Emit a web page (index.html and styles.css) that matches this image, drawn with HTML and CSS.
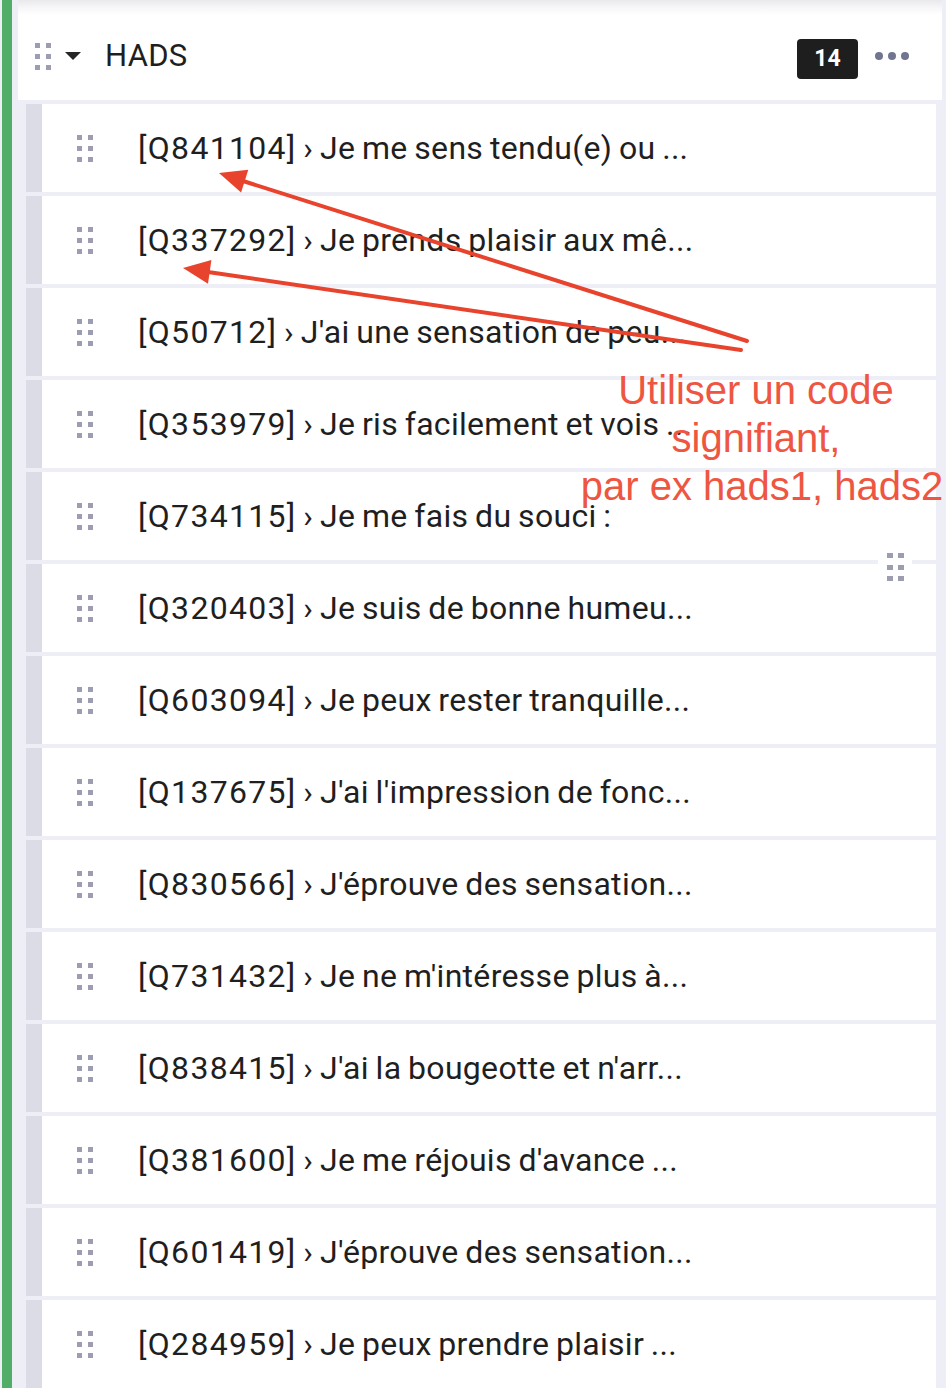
FILE: index.html
```html
<!DOCTYPE html>
<html lang="fr">
<head>
<meta charset="utf-8">
<title>HADS</title>
<link rel="stylesheet" href="styles.css">
</head>
<body>
<div class="board">
  <section class="group">
    <header class="group-head">
      <svg class="grip" width="17" height="27" viewBox="0 0 17 27"><rect x="0" y="0" width="5" height="5"/><rect x="11" y="0" width="5" height="5"/><rect x="0" y="11" width="5" height="5"/><rect x="11" y="11" width="5" height="5"/><rect x="0" y="22" width="5" height="5"/><rect x="11" y="22" width="5" height="5"/></svg>
      <svg class="caret" width="16" height="8" viewBox="0 0 16 8"><polygon points="0,0 16,0 8,8"/></svg>
      <h2 class="title">HADS</h2>
      <span class="count">14</span>
      <span class="more"><i></i><i></i><i></i></span>
    </header>
    <ul class="items">
      <li class="item"><span class="bar"></span><svg class="grip" width="17" height="27" viewBox="0 0 17 27"><rect x="0" y="0" width="5" height="5"/><rect x="11" y="0" width="5" height="5"/><rect x="0" y="11" width="5" height="5"/><rect x="11" y="11" width="5" height="5"/><rect x="0" y="22" width="5" height="5"/><rect x="11" y="22" width="5" height="5"/></svg><span class="label"><span class="code">[Q841104]</span> › Je me sens tendu(e) ou ...</span></li>
      <li class="item"><span class="bar"></span><svg class="grip" width="17" height="27" viewBox="0 0 17 27"><rect x="0" y="0" width="5" height="5"/><rect x="11" y="0" width="5" height="5"/><rect x="0" y="11" width="5" height="5"/><rect x="11" y="11" width="5" height="5"/><rect x="0" y="22" width="5" height="5"/><rect x="11" y="22" width="5" height="5"/></svg><span class="label"><span class="code">[Q337292]</span> › Je prends plaisir aux mê...</span></li>
      <li class="item"><span class="bar"></span><svg class="grip" width="17" height="27" viewBox="0 0 17 27"><rect x="0" y="0" width="5" height="5"/><rect x="11" y="0" width="5" height="5"/><rect x="0" y="11" width="5" height="5"/><rect x="11" y="11" width="5" height="5"/><rect x="0" y="22" width="5" height="5"/><rect x="11" y="22" width="5" height="5"/></svg><span class="label"><span class="code">[Q50712]</span> › J'ai une sensation de peu...</span></li>
      <li class="item"><span class="bar"></span><svg class="grip" width="17" height="27" viewBox="0 0 17 27"><rect x="0" y="0" width="5" height="5"/><rect x="11" y="0" width="5" height="5"/><rect x="0" y="11" width="5" height="5"/><rect x="11" y="11" width="5" height="5"/><rect x="0" y="22" width="5" height="5"/><rect x="11" y="22" width="5" height="5"/></svg><span class="label"><span class="code">[Q353979]</span> › Je ris facilement et vois ...</span></li>
      <li class="item"><span class="bar"></span><svg class="grip" width="17" height="27" viewBox="0 0 17 27"><rect x="0" y="0" width="5" height="5"/><rect x="11" y="0" width="5" height="5"/><rect x="0" y="11" width="5" height="5"/><rect x="11" y="11" width="5" height="5"/><rect x="0" y="22" width="5" height="5"/><rect x="11" y="22" width="5" height="5"/></svg><span class="label"><span class="code">[Q734115]</span> › Je me fais du souci :</span></li>
      <li class="item"><span class="bar"></span><svg class="grip" width="17" height="27" viewBox="0 0 17 27"><rect x="0" y="0" width="5" height="5"/><rect x="11" y="0" width="5" height="5"/><rect x="0" y="11" width="5" height="5"/><rect x="11" y="11" width="5" height="5"/><rect x="0" y="22" width="5" height="5"/><rect x="11" y="22" width="5" height="5"/></svg><span class="label"><span class="code">[Q320403]</span> › Je suis de bonne humeu...</span></li>
      <li class="item"><span class="bar"></span><svg class="grip" width="17" height="27" viewBox="0 0 17 27"><rect x="0" y="0" width="5" height="5"/><rect x="11" y="0" width="5" height="5"/><rect x="0" y="11" width="5" height="5"/><rect x="11" y="11" width="5" height="5"/><rect x="0" y="22" width="5" height="5"/><rect x="11" y="22" width="5" height="5"/></svg><span class="label"><span class="code">[Q603094]</span> › Je peux rester tranquille...</span></li>
      <li class="item"><span class="bar"></span><svg class="grip" width="17" height="27" viewBox="0 0 17 27"><rect x="0" y="0" width="5" height="5"/><rect x="11" y="0" width="5" height="5"/><rect x="0" y="11" width="5" height="5"/><rect x="11" y="11" width="5" height="5"/><rect x="0" y="22" width="5" height="5"/><rect x="11" y="22" width="5" height="5"/></svg><span class="label"><span class="code">[Q137675]</span> › J'ai l'impression de fonc...</span></li>
      <li class="item"><span class="bar"></span><svg class="grip" width="17" height="27" viewBox="0 0 17 27"><rect x="0" y="0" width="5" height="5"/><rect x="11" y="0" width="5" height="5"/><rect x="0" y="11" width="5" height="5"/><rect x="11" y="11" width="5" height="5"/><rect x="0" y="22" width="5" height="5"/><rect x="11" y="22" width="5" height="5"/></svg><span class="label"><span class="code">[Q830566]</span> › J'éprouve des sensation...</span></li>
      <li class="item"><span class="bar"></span><svg class="grip" width="17" height="27" viewBox="0 0 17 27"><rect x="0" y="0" width="5" height="5"/><rect x="11" y="0" width="5" height="5"/><rect x="0" y="11" width="5" height="5"/><rect x="11" y="11" width="5" height="5"/><rect x="0" y="22" width="5" height="5"/><rect x="11" y="22" width="5" height="5"/></svg><span class="label"><span class="code">[Q731432]</span> › Je ne m'intéresse plus à...</span></li>
      <li class="item"><span class="bar"></span><svg class="grip" width="17" height="27" viewBox="0 0 17 27"><rect x="0" y="0" width="5" height="5"/><rect x="11" y="0" width="5" height="5"/><rect x="0" y="11" width="5" height="5"/><rect x="11" y="11" width="5" height="5"/><rect x="0" y="22" width="5" height="5"/><rect x="11" y="22" width="5" height="5"/></svg><span class="label"><span class="code">[Q838415]</span> › J'ai la bougeotte et n'arr...</span></li>
      <li class="item"><span class="bar"></span><svg class="grip" width="17" height="27" viewBox="0 0 17 27"><rect x="0" y="0" width="5" height="5"/><rect x="11" y="0" width="5" height="5"/><rect x="0" y="11" width="5" height="5"/><rect x="11" y="11" width="5" height="5"/><rect x="0" y="22" width="5" height="5"/><rect x="11" y="22" width="5" height="5"/></svg><span class="label"><span class="code">[Q381600]</span> › Je me réjouis d'avance ...</span></li>
      <li class="item"><span class="bar"></span><svg class="grip" width="17" height="27" viewBox="0 0 17 27"><rect x="0" y="0" width="5" height="5"/><rect x="11" y="0" width="5" height="5"/><rect x="0" y="11" width="5" height="5"/><rect x="11" y="11" width="5" height="5"/><rect x="0" y="22" width="5" height="5"/><rect x="11" y="22" width="5" height="5"/></svg><span class="label"><span class="code">[Q601419]</span> › J'éprouve des sensation...</span></li>
      <li class="item"><span class="bar"></span><svg class="grip" width="17" height="27" viewBox="0 0 17 27"><rect x="0" y="0" width="5" height="5"/><rect x="11" y="0" width="5" height="5"/><rect x="0" y="11" width="5" height="5"/><rect x="11" y="11" width="5" height="5"/><rect x="0" y="22" width="5" height="5"/><rect x="11" y="22" width="5" height="5"/></svg><span class="label"><span class="code">[Q284959]</span> › Je peux prendre plaisir ...</span></li>
    </ul>
  </section>

  <svg class="arrows" width="946" height="1388" viewBox="0 0 946 1388">
    <line x1="747" y1="341" x2="243" y2="181" />
    <polygon points="219,173 248.3,169.8 241.1,192.6" />
    <line x1="741" y1="350" x2="208" y2="272" />
    <polygon points="183,268 211.4,260 208,283.8" />
  </svg>

  <div class="float-grip">
    <svg class="grip" width="17" height="28" viewBox="0 0 17 28"><rect x="0" y="0" width="6" height="5"/><rect x="11" y="0" width="6" height="5"/><rect x="0" y="12" width="6" height="5"/><rect x="11" y="12" width="6" height="5"/><rect x="0" y="23" width="6" height="5"/><rect x="11" y="23" width="6" height="5"/></svg>
  </div>

  <p class="note"><span class="l1">Utiliser un code</span><span class="l2">signifiant,</span><span class="l3">par ex hads1, hads2</span></p>
</div>
</body>
</html>
```

FILE: styles.css
```css
html, body {
  margin: 0;
  padding: 0;
}

body {
  background: #eeeef6;
  font-family: Roboto, "Noto Sans", "Liberation Sans", sans-serif;
  color: #1f1f1f;
}

.board {
  position: relative;
  width: 946px;
  height: 1388px;
  overflow: hidden;
  background: #eeeef6;
}

.group {
  margin-left: 2px;
  border-left: 10px solid #52ad68;
  padding-left: 6px;
  width: 924px;
  height: 1388px;
}

.group-head {
  height: 100px;
  box-sizing: border-box;
  display: flex;
  align-items: center;
  padding: 12px 33px 0 17px;
  background: linear-gradient(to bottom, #e9e9ed 0px, #f7f7f9 8px, #ffffff 15px);
}

.grip {
  display: block;
  flex: none;
  fill: #9d9db1;
}

.caret {
  display: block;
  flex: none;
  margin-left: 13px;
  fill: #262626;
}

.title {
  margin: 0 0 0 24px;
  font-weight: 400;
  font-size: 31px;
  line-height: 36px;
  letter-spacing: 0.3px;
  color: #1f1f1f;
  flex: 1;
}

.count {
  margin-top: 6px;
  width: 61px;
  height: 40px;
  border-radius: 4px;
  background: #1e1e1e;
  color: #ffffff;
  font-weight: 700;
  font-size: 23px;
  line-height: 40px;
  text-align: center;
}

.more {
  display: flex;
  gap: 5px;
  margin-left: 17px;
}

.more i {
  display: block;
  width: 8px;
  height: 8px;
  border-radius: 50%;
  background: #717590;
}

.items {
  list-style: none;
  margin: 0 6px 0 8px;
  padding: 0;
}

.item {
  margin-top: 4px;
  height: 88px;
  background: #ffffff;
  display: flex;
  align-items: center;
}

.bar {
  align-self: stretch;
  width: 16px;
  background: #dcdce6;
  flex: none;
}

.item .grip {
  margin-left: 35px;
}

.label {
  margin-left: 44px;
  font-size: 32px;
  line-height: 38px;
  letter-spacing: 0.3px;
  word-spacing: -1.5px;
  white-space: nowrap;
  color: #1f1f1f;
}

.code {
  letter-spacing: 1.3px;
}

.arrows {
  position: absolute;
  top: 0;
  left: 0;
  pointer-events: none;
}

.arrows line {
  stroke: #e8432d;
  stroke-width: 4;
  stroke-linecap: round;
}

.arrows polygon {
  fill: #e8432d;
}

.float-grip {
  position: absolute;
  left: 878px;
  top: 549px;
  width: 34px;
  height: 36px;
  background: #ffffff;
  display: flex;
  align-items: center;
  justify-content: center;
}

.float-grip .grip {
  margin-left: 0;
}

.note {
  position: absolute;
  left: 580px;
  top: 366px;
  width: 364px;
  margin: 0;
  font-family: "Liberation Sans", Arial, sans-serif;
  font-size: 40px;
  line-height: 48px;
  color: #ee5642;
  text-align: center;
}

.note span {
  display: block;
}

.note .l1,
.note .l2 {
  padding-right: 12px;
}
```
